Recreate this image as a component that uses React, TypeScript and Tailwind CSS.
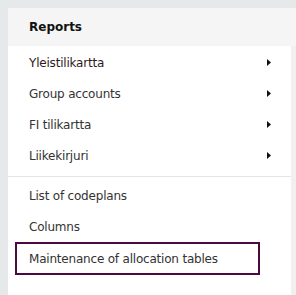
import React from "react";

const Arrow = () => (
  <svg width="4" height="7" viewBox="0 0 4 7" className="block">
    <path d="M0 0 L4 3.5 L0 7 Z" fill="#111" />
  </svg>
);

const Row = ({ label, arrow, first }: { label: string; arrow?: boolean; first?: boolean }) => (
  <div className="flex items-center justify-between h-[31px] pl-[21px] pr-[20px]">
    <span className={first ? "text-[#2e1a24]" : "text-[#333]"}>{label}</span>
    {arrow && <Arrow />}
  </div>
);

export default function App() {
  return (
    <div
      className="w-[296px] h-[295px] bg-[#e6e9e9] pt-[8px] pl-[8px] overflow-hidden text-[12px] tracking-[-0.2px]"
      style={{ fontFamily: '"DejaVu Sans", Verdana, sans-serif' }}
    >
      <div className="flex flex-col h-full">
        <div className="h-[38px] bg-[#f5f5f5] flex items-center pl-[21px] font-bold text-[#111] text-[12px] tracking-normal">
          Reports
        </div>
        <div className="flex flex-1">
          <div className="w-[283px] bg-white flex flex-col pt-[1px]">
            <Row label="Yleistilikartta" arrow first />
            <Row label="Group accounts" arrow />
            <Row label="FI tilikartta" arrow />
            <Row label="Liikekirjuri" arrow />
            <div className="h-[5px]" />
            <div className="h-px bg-[#e6e6e6]" />
            <div className="h-[3px]" />
            <Row label="List of codeplans" />
            <Row label="Columns" />
            <div className="ml-[7px] w-[245px] h-[33px] border-2 border-[#4a0a40] flex items-center pl-[12px] text-[#333]">
              Maintenance of allocation tables
            </div>
          </div>
          <div className="flex-1 bg-[#f0f0f0]" />
        </div>
      </div>
    </div>
  );
}
